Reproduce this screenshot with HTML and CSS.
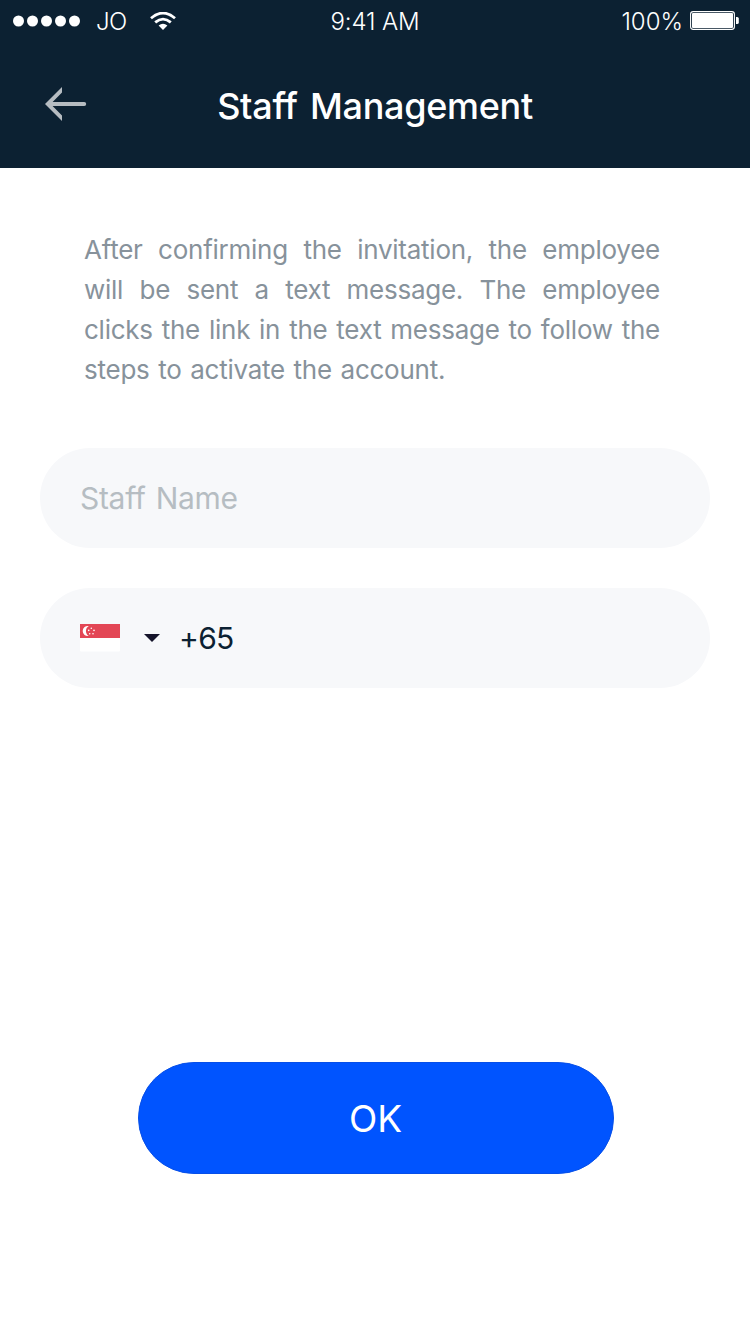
FILE: index.html
```html
<!DOCTYPE html>
<html lang="en">
<head>
<meta charset="utf-8">
<title>Staff Management</title>
<link rel="stylesheet" href="styles.css">
</head>
<body>
<div class="screen">
  <header class="header">
    <div class="status">
      <div class="status-left">
        <svg class="signal" width="68" height="12" viewBox="0 0 68 12" fill="#fff"><circle cx="5.5" cy="6" r="5.5"/><circle cx="19.5" cy="6" r="5.5"/><circle cx="33.5" cy="6" r="5.5"/><circle cx="47.5" cy="6" r="5.5"/><circle cx="61.5" cy="6" r="5.5"/></svg>
        <span class="carrier">JO</span>
        <svg class="wifi" width="26" height="18" viewBox="0 0 26 18"><path d="M1 6.2Q13-4 25 6.2M5.2 10.4Q13 3.8 20.8 10.4" fill="none" stroke="#fff" stroke-width="2.8"/><path d="M8.6 13.6Q13 9.8 17.4 13.6L13 18Z" fill="#fff"/></svg>
      </div>
      <span class="time">9:41 AM</span>
      <div class="status-right">
        <span class="percent">100%</span>
        <svg width="49" height="20" viewBox="0 0 49 20"><rect x=".6" y=".6" width="43.8" height="17.8" rx="2.6" fill="none" stroke="#fff" stroke-width="1.1"/><rect x="2" y="2" width="41" height="15" rx="1" fill="#fff"/><path d="M46 6h1.2q1.6 0 1.6 1.6v3.8q0 1.6-1.6 1.6H46z" fill="#fff"/></svg>
      </div>
    </div>
    <div class="navbar">
      <svg class="back" width="42" height="34" viewBox="0 0 42 34"><path d="M17 0V5.6L7.6 15H39.2a2 2 0 0 1 0 4H7.6L17 28.4V34L0 17Z" fill="#b6bcc1"/></svg>
      <h1 class="title">Staff Management</h1>
    </div>
  </header>
  <main class="content">
    <p class="intro">After confirming the invitation, the employee will be sent a text message. The employee clicks the link in the text message to follow the steps to activate the account.</p>
    <div class="field"><span class="placeholder">Staff Name</span></div>
    <div class="field">
      <svg class="flag" width="40" height="28" viewBox="0 0 40 28"><path d="M0 14H40V26.5q0 1-1 1H1q-1 0-1-1z" fill="#fff"/><path d="M0 0H40V14H0z" fill="#e34655"/><path d="M8.8 2A5.1 5.1 0 1 0 8.8 12A5.8 5.8 0 0 1 8.8 2Z" fill="#fff"/><g fill="#fff"><circle cx="11.3" cy="4.3" r=".8"/><circle cx="8.7" cy="6.4" r=".8"/><circle cx="14" cy="6.4" r=".8"/><circle cx="9.7" cy="9.7" r=".8"/><circle cx="13" cy="9.7" r=".8"/></g></svg>
      <svg class="caret" width="16" height="8" viewBox="0 0 16 8"><path d="M0 0H16L8 8Z" fill="#15142a"/></svg>
      <span class="code">+65</span>
    </div>
    <button class="ok" type="button">OK</button>
  </main>
</div>
</body>
</html>
```
FILE: styles.css
```css
* { box-sizing: border-box; }
body { margin: 0; background: #fff; font-family: Inter, "Noto Sans", sans-serif; }
.screen { width: 750px; height: 1334px; background: #fff; overflow: hidden; }
svg { display: block; flex: none; }
.header { height: 168px; background: #0c2132; color: #fff; }
.status { display: grid; grid-template-columns: 1fr auto 1fr; align-items: center; height: 42px; padding: 0 11px 0 13px; font-size: 24px; font-weight: 300; line-height: 42px; white-space: nowrap; }
.status-left, .status-right { display: flex; align-items: center; }
.status-right { justify-content: flex-end; gap: 7px; }
.signal { margin-right: 15px; }
.carrier, .time, .percent { padding-top: 2px; line-height: 40px; }
.carrier { width: 54px; letter-spacing: -.5px; }
.time { margin-left: -2px; letter-spacing: -.1px; }
.navbar { display: grid; grid-template-columns: 80px 1fr 80px; align-items: center; height: 124px; padding: 0 45px; }
.title { margin: 4px 0 0; text-align: center; font-size: 36px; font-weight: 500; line-height: 44px; letter-spacing: -.3px; word-spacing: 3px; white-space: nowrap; }
.content { display: flex; flex-direction: column; padding: 62px 40px 0; }
.intro { width: 576px; margin: 0 0 58px 44px; color: #87929b; font-size: 26px; font-weight: 400; line-height: 40px; letter-spacing: -.25px; word-spacing: 1.6px; text-align: justify; }
.field { display: flex; align-items: center; height: 100px; margin-bottom: 40px; padding: 0 40px; border-radius: 50px; background: #f7f8fa; font-size: 30px; font-weight: 300; }
.placeholder { color: #b6bdc2; letter-spacing: -.3px; word-spacing: 2px; }
.caret { margin: 0 19px 0 24px; }
.code { color: #0c2132; letter-spacing: -.7px; }
.placeholder, .code { font-weight: 400; line-height: 38px; }
.ok { align-self: center; width: 476px; height: 112px; margin: 334px 0 0 2px; padding: 1px 1px 0 0; border: 1px solid #064fe8; border-radius: 56px; background: #0054ff; color: #fff; font: 400 37px Inter, "Noto Sans", sans-serif; }
```
